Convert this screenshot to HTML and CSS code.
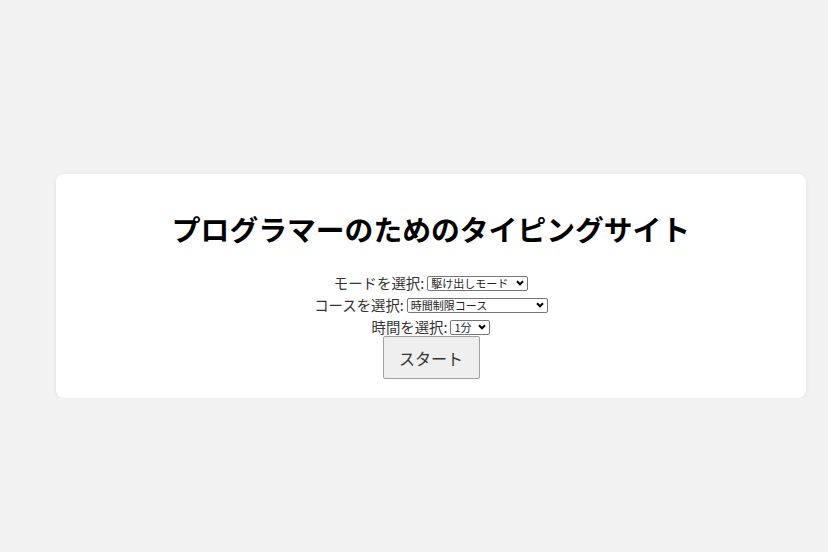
FILE: index.html
```html
<!DOCTYPE html>
<html lang="ja">
<head>
<meta charset="utf-8">
<title>プログラマーのためのタイピングサイト</title>
<link rel="stylesheet" href="styles.css">
</head>
<body>
<div class="page">
  <div class="card">
    <h1 class="title">プログラマーのためのタイピングサイト</h1>
    <div class="form">
      <div class="row">
        <label class="label" for="mode">モードを選択:</label>
        <select id="mode" class="select select-mode">
          <option>駆け出しモード</option>
        </select>
      </div>
      <div class="row">
        <label class="label" for="course">コースを選択:</label>
        <select id="course" class="select select-course">
          <option>時間制限コース</option>
        </select>
      </div>
      <div class="row">
        <label class="label" for="time">時間を選択:</label>
        <select id="time" class="select select-time">
          <option>1分</option>
        </select>
      </div>
      <button class="start" type="button">スタート</button>
    </div>
  </div>
</div>
</body>
</html>
```

FILE: styles.css
```css
html, body {
  margin: 0;
  padding: 0;
}
body {
  background: #f2f2f2;
  font-family: "Noto Sans CJK JP", "Noto Sans", sans-serif;
  color: #222;
}
.page {
  padding: 174px 22px 0 56px;
}
.card {
  background: #fff;
  border-radius: 8px;
  box-shadow: 0 1px 4px rgba(0, 0, 0, 0.08);
  padding: 20px 20px 19px;
  text-align: center;
}
.title {
  margin: 17px 0 25px;
  font-size: 28.8px;
  line-height: 36px;
  font-weight: bold;
  color: #000;
}
.form {
  display: flex;
  flex-direction: column;
  align-items: center;
}
.row {
  height: 22px;
  display: flex;
  align-items: center;
  gap: 3px;
  font-size: 14.4px;
  color: #333;
}
.label {
  line-height: 22px;
}
.select {
  -webkit-appearance: none;
  appearance: none;
  box-sizing: border-box;
  font-family: "Noto Sans CJK JP", sans-serif;
  font-size: 11px;
  line-height: 13px;
  height: 15px;
  padding: 0 14px 0 3px;
  border: 1px solid #767676;
  border-radius: 2px;
  color: #222;
  text-align: left;
  background-color: #fff;
  background-image: url("data:image/svg+xml;utf8,<svg xmlns='http://www.w3.org/2000/svg' width='8' height='6' viewBox='0 0 8 6'><path d='M1 1.3 L4 4.3 L7 1.3' fill='none' stroke='%23000' stroke-width='2'/></svg>");
  background-repeat: no-repeat;
  background-position: right 3px center;
  background-size: 8px 6px;
}
.select-mode {
  width: 101px;
}
.select-course {
  width: 141px;
}
.select-time {
  width: 40px;
}
.start {
  margin-top: -2px;
  width: 97px;
  height: 43px;
  font-family: "Noto Sans CJK JP", sans-serif;
  font-size: 16px;
  color: #333;
  background: #efefef;
  border: 1px solid #a0a0a0;
  border-radius: 2px;
}
```
